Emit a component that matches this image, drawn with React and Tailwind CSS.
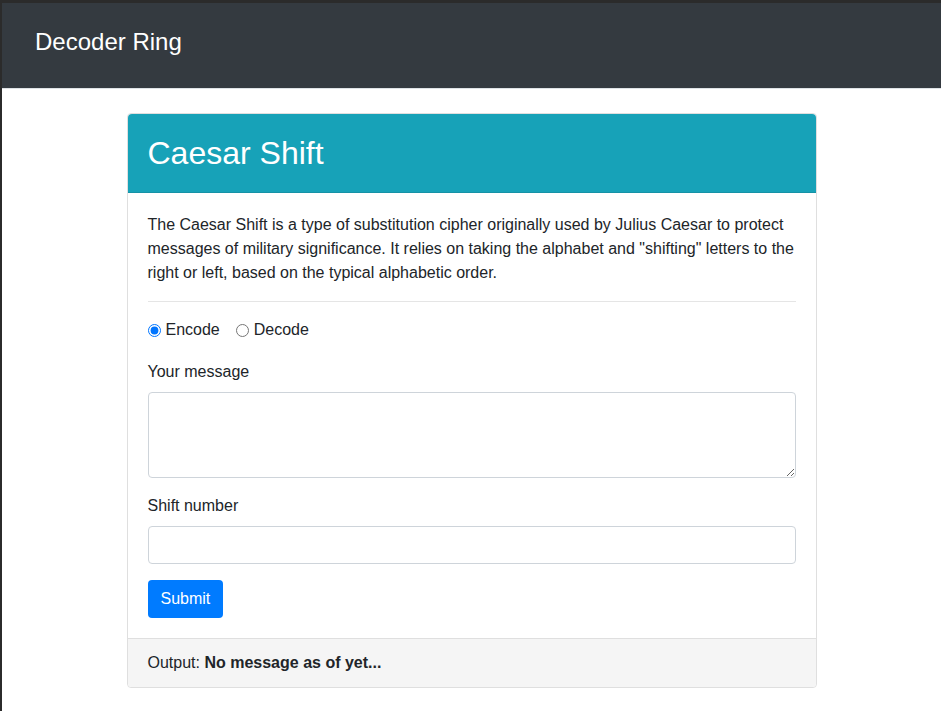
import React, { useState } from "react";

function App() {
  const [mode, setMode] = useState("encode");
  const [message, setMessage] = useState("");
  const [shift, setShift] = useState("");
  const [output, setOutput] = useState("");

  const handleSubmit = (e) => {
    e.preventDefault();
    const n = parseInt(shift, 10) || 0;
    const s = mode === "encode" ? n : -n;
    const res = message.replace(/[a-z]/gi, (c) => {
      const base = c <= "Z" ? 65 : 97;
      return String.fromCharCode(((((c.charCodeAt(0) - base + s) % 26) + 26) % 26) + base);
    });
    setOutput(res);
  };

  return (
    <div className="min-h-screen bg-white border-t-[3px] border-l-2 border-[#2b2b2b] text-[#212529] text-base leading-6 font-['Liberation_Sans',Arial,sans-serif]">
      {/* Navbar */}
      <nav className="h-[86px] bg-[#343a40] flex items-center pl-[33px] pb-[8px] border-b border-b-[#dee2e6]">
        <span className="text-white text-[24px] leading-8">Decoder Ring</span>
      </nav>

      {/* Main Content */}
      <div className="max-w-[720px] mx-auto px-[15px] pt-6">
        <div className="border border-[#dfdfdf] rounded">
          <div className="bg-[#17a2b8] px-5 py-5 rounded-t border-b border-b-[#1592a6]">
            <h2 className="text-white text-[32px] leading-[38px]">Caesar Shift</h2>
          </div>

          <form onSubmit={handleSubmit} className="px-5 pt-5 pb-5">
            <p>
              The Caesar Shift is a type of substitution cipher originally used by Julius Caesar to protect
              messages of military significance. It relies on taking the alphabet and "shifting" letters to the
              right or left, based on the typical alphabetic order.
            </p>
            <hr className="my-4 border-t border-[#e5e5e5]" />

            <div className="flex items-center mb-[18px]">
              <label className="flex items-center mr-4">
                <input
                  type="radio"
                  name="mode"
                  checked={mode === "encode"}
                  onChange={() => setMode("encode")}
                  className="w-[13px] h-[13px] m-0 mr-[5px]"
                />
                Encode
              </label>
              <label className="flex items-center">
                <input
                  type="radio"
                  name="mode"
                  checked={mode === "decode"}
                  onChange={() => setMode("decode")}
                  className="w-[13px] h-[13px] m-0 mr-[5px]"
                />
                Decode
              </label>
            </div>

            <div className="mb-4">
              <label className="block mb-2">Your message</label>
              <textarea
                value={message}
                onChange={(e) => setMessage(e.target.value)}
                className="block w-full h-[86px] border border-[#ced4da] rounded px-3 py-1.5 outline-none"
              />
            </div>

            <div className="mb-4">
              <label className="block mb-2">Shift number</label>
              <input
                type="number"
                value={shift}
                onChange={(e) => setShift(e.target.value)}
                className="block w-full h-[38px] border border-[#ced4da] rounded px-3 outline-none"
              />
            </div>

            <button type="submit" className="bg-[#007bff] text-white rounded px-[13px] h-[38px] leading-6">
              Submit
            </button>
          </form>

          <div className="bg-[#f5f5f5] border-t border-t-[#dfdfdf] px-5 py-3 rounded-b">
            Output: <strong className="font-bold">{output || "No message as of yet..."}</strong>
          </div>
        </div>
      </div>
    </div>
  );
}

export default App;
